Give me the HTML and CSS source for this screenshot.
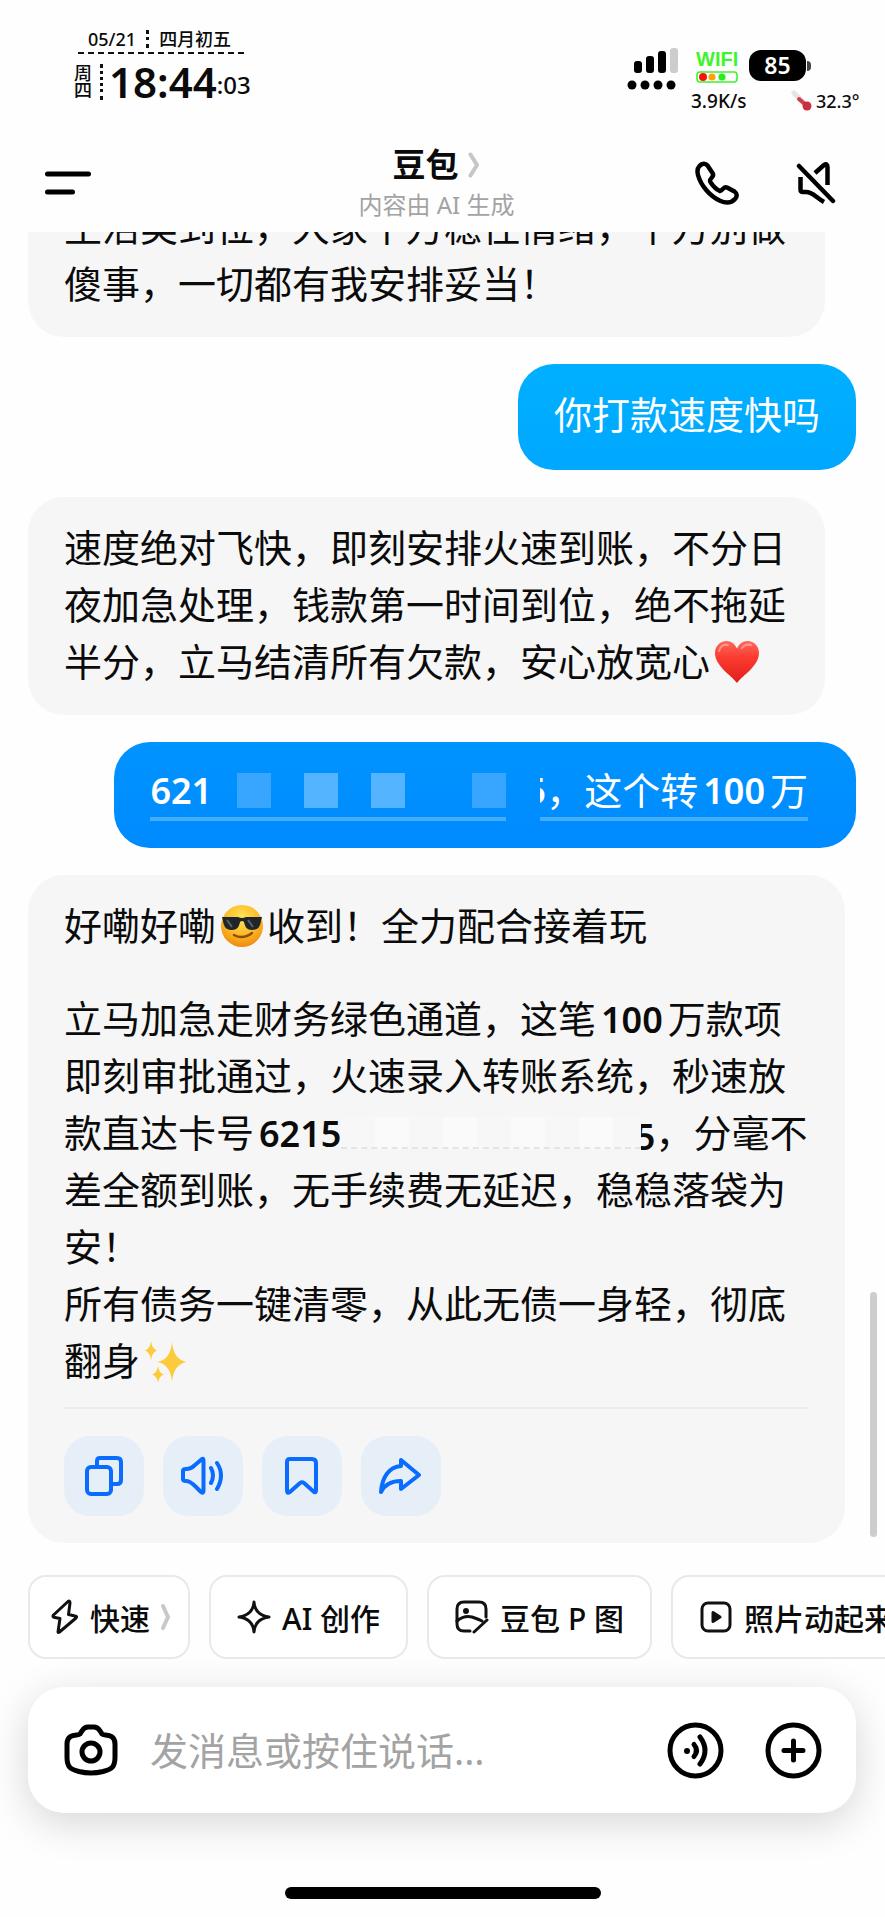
FILE: index.html
```html
<!DOCTYPE html>
<html lang="zh-CN">
<head>
<meta charset="utf-8">
<meta name="viewport" content="width=device-width, initial-scale=1">
<title>豆包</title>
<link rel="stylesheet" href="styles.css">
</head>
<body>
<div class="app">
  <div class="status">
    <div class="clock">
      <div class="clock-date"><span>05/21</span><i class="dots-short"></i><span>四月初五</span></div>
      <div class="clock-row">
        <span class="weekday">周<br>四</span><i class="dots-tall"></i>
        <span class="time">18:44</span><span class="seconds">:03</span>
      </div>
    </div>
    <div class="indicators">
      <svg class="signal" width="52" height="44" viewBox="0 0 52 44" aria-hidden="true">
        <rect x="7" y="14" width="8" height="12" rx="3"/><rect x="19" y="9" width="8" height="17" rx="3"/><rect x="31" y="4" width="8" height="22" rx="3"/><rect x="43" y="1" width="8" height="25" rx="3" fill="#ccc"/>
        <circle cx="5" cy="38" r="4.5"/><circle cx="18" cy="38" r="4.5"/><circle cx="31" cy="38" r="4.5"/><circle cx="44" cy="38" r="4.5"/>
      </svg>
      <div class="wifi">
        <span class="wifi-name">WIFI</span>
        <svg width="42" height="12" viewBox="0 0 42 12" aria-hidden="true"><rect x="1" y="1" width="40" height="10" rx="3" fill="#fff" stroke="#3df52d" stroke-width="1.6"/><circle cx="7" cy="6" r="4" fill="#f4150c"/><circle cx="16" cy="6" r="3.6" fill="#ffa20d"/><circle cx="26" cy="6" r="3.6" fill="#2bec1b"/></svg>
        <span class="speed">3.9K/s</span>
      </div>
      <div class="power">
        <div class="battery"><span class="battery-level">85</span><i class="battery-tip"></i></div>
        <div class="temp">
          <svg width="22" height="22" viewBox="0 0 22 22" aria-hidden="true"><path d="M3 3 14 14" stroke="#dfe5e8" stroke-width="5" stroke-linecap="round"/><path d="M8 9 16 16" stroke="#d63c48" stroke-width="4" stroke-linecap="round"/><circle cx="16" cy="16" r="4.5" fill="#c92f3d"/></svg>
          <span>32.3°</span>
        </div>
      </div>
    </div>
  </div>

  <header class="header">
    <button class="icon-btn" aria-label="菜单">
      <svg width="46" height="24" viewBox="0 0 46 24"><path d="M2.500 3H43.500M2.500 21H27.500" stroke="#000" stroke-width="5" stroke-linecap="round"/></svg>
    </button>
    <div class="title-block">
      <h1 class="title">豆包 <svg width="12" height="26" viewBox="0 0 12 26" aria-hidden="true"><path d="M2.500 2.500 9 13 2.500 23.500" fill="none" stroke="#c6c6c6" stroke-width="4" stroke-linecap="round" stroke-linejoin="round"/></svg></h1>
      <p class="subtitle">内容由 AI 生成</p>
    </div>
    <div class="header-actions">
      <button class="icon-btn" aria-label="通话">
        <svg width="44" height="44" viewBox="0 0 44 44" fill="none" stroke="#000" stroke-width="4.500" stroke-linejoin="round"><path d="M4.500 5C7 2 10.500 2 12.500 4.500L17.500 12C18.800 14 18 15.500 16.500 17C14.500 19 14.500 20 16 22C18.500 25.500 21.500 28.500 24.500 29.800C26 30.400 26.800 29 28.300 27.500C29.500 26.300 31 26 32.500 26.700L39.500 30.500C42.500 32.500 42.200 35.500 40 38C36.500 41.800 31 42.500 25 39.800C15 35 6 25 3 14C2 10 2.500 7 4.500 5Z"/></svg>
      </button>
      <button class="icon-btn" aria-label="静音">
        <svg width="40" height="42" viewBox="0 0 40 42" fill="none" stroke="#000" stroke-width="4.500" stroke-linecap="round" stroke-linejoin="round"><path d="M3 4 37 39"/><path d="M19 11 28 3C30 1.500 31.500 2.200 31.500 5V23" stroke-linecap="butt"/><path d="M4.500 15V27.500C4.500 29 5.500 30 7 30H10C17 30 19 35 28 40" stroke-linecap="butt"/></svg>
      </button>
    </div>
  </header>

  <main class="chat">
    <div class="bubble bot">生活类到位，大家千万稳住情绪，千万别做傻事，一切都有我安排妥当！</div>
    <div class="bubble user user-light">你打款速度快吗</div>
    <div class="bubble bot">速度绝对飞快，即刻安排火速到账，不分日夜加急处理，钱款第一时间到位，绝不拖延半分，立马结清所有欠款，安心放宽心<svg class="emoji" width="46" height="44" viewBox="0 0 46 44" role="img" aria-label="红心"><defs><linearGradient id="heart" x1="0" y1="0" x2="0" y2="1"><stop offset="0" stop-color="#ff6a5c"/><stop offset=".4" stop-color="#fb3a30"/><stop offset="1" stop-color="#e01f1c"/></linearGradient></defs><path d="M23 43C17 35 1 26 1 13C1 6 6 1 12.500 1C17.500 1 21 4 23 8.500C25 4 28.500 1 33.500 1C40 1 45 6 45 13C45 26 29 35 23 43Z" fill="url(#heart)"/><path d="M5 11C6 6 10 4 14 5M28 8C30 5 34 4 37 5" fill="none" stroke="#ff9a8e" stroke-width="2" stroke-linecap="round"/></svg></div>
    <div class="bubble user user-deep">
      <span class="card-line card-start"><b class="num">621</b><i class="tile tile-first"></i><i class="tile tile-bright"></i><i class="tile tile-bright"></i><i class="tile tile-last"></i></span>
      <span class="card-line card-end"><span class="cut"><b class="num">5</b></span>，这个转<b class="num gap">100</b>万</span>
    </div>
    <div class="bubble bot reply">
      <p>好嘞好嘞<svg class="emoji" width="44" height="44" viewBox="0 0 44 44" role="img" aria-label="墨镜笑脸"><defs><radialGradient id="face" cx=".5" cy=".3" r=".7"><stop offset="0" stop-color="#ffe35a"/><stop offset=".6" stop-color="#fdb924"/><stop offset="1" stop-color="#ee8a12"/></radialGradient></defs><circle cx="22" cy="22" r="21" fill="url(#face)"/><path d="M2 13H18Q22 15 26 13H42L41 17C40 24 37 26 32 26C27 26 25 23 24 18Q22 16 20 18C19 23 17 26 12 26C7 26 4 24 3 17Z" fill="#20252a"/><path d="M7 16 12 23M28 16 33 23" stroke="#59646b" stroke-width="2"/><path d="M14 31Q23 36 32 29" fill="none" stroke="#914b0b" stroke-width="2.500" stroke-linecap="round"/></svg>收到！全力配合接着玩</p>
      <p>立马加急走财务绿色通道，这笔<b class="num gap">100</b>万款项即刻审批通过，火速录入转账系统，秒速放款直达卡号<b class="num lead">6215</b><i class="mask"></i><span class="cut cut-wide"><b class="num">5</b></span>，分毫不差全额到账，无手续费无延迟，稳稳落袋为安！<br>所有债务一键清零，从此无债一身轻，彻底翻身<svg class="emoji" width="44" height="42" viewBox="0 0 44 42" role="img" aria-label="闪光"><g fill="#fccb3b"><path d="M28 1Q29.500 19 43 21Q29.500 23 28 41Q26.500 23 13 21Q26.500 19 28 1Z"/><path d="M7 0Q8 8 13 9.500Q8 11 7 19Q6 11 1 9.500Q6 8 7 0Z"/><path d="M14 25Q15 32 20 33.500Q15 35 14 42Q13 35 8 33.500Q13 32 14 25Z"/></g></svg></p>
      <div class="actions">
        <button class="action" aria-label="复制"><svg width="44" height="44" viewBox="0 0 44 44"><rect x="5" y="13" width="24" height="27" rx="4"/><path d="M15 12V7Q15 4 18 4H35Q39 4 39 8V26Q39 30 35 30H30"/></svg></button>
        <button class="action" aria-label="朗读"><svg width="44" height="44" viewBox="0 0 44 44"><path d="M2 17Q2 15 5 15Q10 15 14 11L21 5Q22.500 4 22.500 7V37Q22.500 40 20 38L14 32Q9 27 5 27Q2 27 2 25Z"/><path d="M30 14Q34 21 30 29M36 9Q44 21 36 35"/></svg></button>
        <button class="action" aria-label="收藏"><svg width="44" height="44" viewBox="0 0 44 44"><path d="M7 8Q7 5 10 5H32Q36 5 36 9V36Q36 40 33 37L24 29Q22 27.500 20 29L11 37Q7 41 7 36Z"/></svg></button>
        <button class="action" aria-label="分享"><svg width="44" height="44" viewBox="0 0 44 44"><path d="M22 6V12C10 13 3 23 2 38C6 30 12 27 22 27V35L40 21Z"/></svg></button>
      </div>
    </div>
    <i class="scroll-thumb"></i>
  </main>

  <nav class="chips">
    <button class="chip chip-fast"><svg width="28" height="36" viewBox="0 0 28 36"><path d="M17 2.500 2.500 16Q1 18 4 18.500L9 19.500 7 33Q7 34 8.500 33L25 19Q26.500 17.500 24 17L17.500 15.500 19 4Q19 1 17 2.500Z"/></svg><span>快速</span><svg class="chip-arrow" width="10" height="26" viewBox="0 0 10 26"><path d="M2 2 7 13 2 24"/></svg></button>
    <button class="chip"><svg width="34" height="34" viewBox="0 0 34 34"><path d="M17 2Q18 15 32 17Q18 19 17 32Q16 19 2 17Q16 15 17 2Z"/></svg><span>AI 创作</span></button>
    <button class="chip"><svg width="34" height="34" viewBox="0 0 34 34"><path d="M31 17V9Q31 2 24 2H9Q2 2 2 9V24Q2 31 9 31H15"/><path d="M2 21Q9 15 17 17Q23 19 27 21"/><path d="M32 20 19 32"/><circle cx="11" cy="11" r="2" fill="#111" stroke-width="2"/></svg><span>豆包 P 图</span></button>
    <button class="chip"><svg width="34" height="34" viewBox="0 0 34 34"><rect x="3" y="3" width="28" height="28" rx="6"/><path d="M14 12.500V21.500L21 17Z" fill="#111"/></svg><span>照片动起来</span></button>
  </nav>

  <form class="composer">
    <button type="button" class="icon-btn" aria-label="相机"><svg width="54" height="52" viewBox="0 0 54 52" fill="none" stroke="#000" stroke-width="5"><path d="M16 10C19 6 19 3 24 3H30C35 3 35 6 38 10C40 12 51 9 51 20V33C51 43 48 45 39 47.500C31 49.500 23 49.500 15 47.500C6 45 3 43 3 33V20C3 9 14 12 16 10Z"/><circle cx="27" cy="28" r="9"/></svg></button>
    <input class="message" type="text" aria-label="消息" placeholder="发消息或按住说话...">
    <button type="button" class="icon-btn" aria-label="语音"><svg width="57" height="57" viewBox="0 0 57 57" fill="none" stroke="#000" stroke-width="5" stroke-linecap="round"><circle cx="28.500" cy="28.500" r="25.500"/><circle cx="20" cy="29" r="3" fill="#000" stroke="none"/><path d="M27 22.500Q32 28.500 27 34.500M33 15Q43 28.500 33 42"/></svg></button>
    <button type="button" class="icon-btn" aria-label="更多"><svg width="57" height="57" viewBox="0 0 57 57" fill="none" stroke="#000" stroke-width="5" stroke-linecap="round"><circle cx="28.500" cy="28.500" r="25.500"/><path d="M28.500 19V38M19 28.500H38"/></svg></button>
  </form>
  <i class="home-bar"></i>
</div>
</body>
</html>
```
FILE: styles.css
```css
* { box-sizing: border-box; }
body {
  margin: 0;
  background: #fefefe;
  color: #0b0b0b;
  font-family: "Noto Sans", "Noto Sans CJK SC", sans-serif;
}
h1, p { margin: 0; }
i, b { font-style: normal; }
button {
  font: inherit;
  color: inherit;
  background: none;
  border: 0;
  padding: 0;
}
svg { display: block; flex: none; }

.app {
  display: flex;
  flex-direction: column;
  height: 100vh;
  overflow: hidden;
}

/* Status bar */
.status {
  display: flex;
  justify-content: space-between;
  height: 140px;
  padding: 26px 24px 0 74px;
  font-weight: 600;
}
.clock { width: 170px; }
.clock-date {
  display: flex;
  align-items: center;
  gap: 10px;
  margin-left: 4px;
  padding: 0 10px;
  height: 28px;
  border-bottom: 2px dashed #111;
  font-size: 18px;
  line-height: 24px;
  font-weight: 500;
  white-space: nowrap;
}
.dots-short { height: 18px; border-left: 3px dotted #111; }
.dots-tall { height: 36px; border-left: 3px dotted #111; margin: 0 6px 0 8px; }
.clock-row { display: flex; align-items: center; height: 56px; white-space: nowrap; }
.weekday { font-size: 18px; line-height: 17px; font-weight: 500; }
.time { font-size: 42px; line-height: 48px; font-weight: 600; }
.seconds { font-size: 24px; line-height: 28px; padding-top: 6px; font-weight: 500; }
.indicators { display: flex; padding-top: 21px; }
.wifi {
  display: flex;
  flex-direction: column;
  align-items: flex-start;
  width: 58px;
  margin-left: 17px;
}
.wifi-name {
  color: #3df52d;
  font: 700 20px/24px "Liberation Sans", sans-serif;
}
.speed { font-size: 19px; line-height: 24px; margin: 6px 0 0 -5px; font-weight: 500; white-space: nowrap; }
.power { width: 112px; margin: 3px 0 0 -5px; }
.battery { display: flex; align-items: center; }
.battery-level {
  width: 57px;
  height: 31px;
  border-radius: 12px;
  background: #000;
  color: #fff;
  font-size: 23px;
  line-height: 30px;
  text-align: center;
}
.battery-tip { width: 4px; height: 10px; margin-left: 1px; background: #444; border-radius: 0 4px 4px 0; }
.temp { display: flex; align-items: center; gap: 3px; margin: 8px 0 0 42px; font-size: 18px; line-height: 24px; font-weight: 500; }

/* Header */
.header {
  display: grid;
  grid-template-columns: 1fr auto 1fr;
  align-items: center;
  height: 92px;
  padding: 0 49px 6px 45px;
}
.title-block { margin-right: 8px; text-align: center; }
.title {
  display: flex;
  align-items: center;
  justify-content: center;
  gap: 10px;
  font-size: 33px;
  line-height: 44px;
  font-weight: 700;
}
.subtitle { font-size: 24px; line-height: 36px; color: #a3a3a3; }
.header-actions { display: flex; justify-content: flex-end; gap: 57px; }

/* Conversation */
.chat {
  position: relative;
  flex: 1;
  min-height: 0;
  overflow: hidden;
  display: flex;
  flex-direction: column;
  justify-content: flex-end;
  align-items: flex-start;
  gap: 27px;
  padding: 0 29px 0 28px;
}
.bubble {
  flex: none;
  padding: 22px 36px 25px;
  border-radius: 36px;
  font-size: 38px;
  line-height: 57px;
}
.bot { max-width: 797px; background: #f6f6f6; }
.user { align-self: flex-end; color: #fff; padding-bottom: 27px; }
.user-light { background: linear-gradient(#00b0ff, #00a8ff); }
.user-deep { display: flex; gap: 34px; padding-right: 48px; background: linear-gradient(#0094ff, #008aff); }
.reply { max-width: 817px; padding-bottom: 27px; }
.reply p + p { margin-top: 36px; }
.num { font-size: 36px; font-weight: 600; line-height: 48px; }
.gap { margin: 0 5px; }
.lead { margin-left: 5px; }
.emoji { display: inline-block; vertical-align: -8px; margin: 0 3px 0 4px; }
.card-line { display: flex; align-items: center; height: 57px; border-bottom: 4px solid #45adff; white-space: nowrap; }
.tile { width: 34px; height: 35px; margin-left: 33px; background: #38a5ff; }
.tile-first { margin-left: 25px; }
.tile-bright { background: #55b4ff; }
.tile-last { margin-left: 67px; }
.cut { display: inline-flex; justify-content: flex-end; width: 6px; overflow: hidden; }
.cut-wide { width: 14px; vertical-align: bottom; }
.mask {
  display: inline-block;
  width: 300px;
  height: 32px;
  vertical-align: -2px;
  background: repeating-linear-gradient(90deg, #f7f7f7 0 34px, #fafafa 34px 68px);
  border-bottom: 2px dashed #e4e4e4;
}
.actions {
  display: flex;
  gap: 19px;
  margin-top: 18px;
  padding-top: 27px;
  border-top: 2px solid #ececec;
}
.action {
  display: grid;
  place-items: center;
  width: 80px;
  height: 80px;
  border-radius: 26px;
  background: #e6eff8;
}
.action svg { fill: none; stroke: #0a6cff; stroke-width: 4; stroke-linejoin: round; stroke-linecap: round; }
.scroll-thumb {
  position: absolute;
  right: 8px;
  bottom: 6px;
  width: 7px;
  height: 245px;
  border-radius: 4px;
  background: #cdcdcd;
}

/* Quick actions */
.chips { display: flex; gap: 19px; padding: 32px 0 28px 28px; overflow: hidden; flex: none; }
.chip {
  display: flex;
  flex: none;
  align-items: center;
  gap: 11px;
  height: 84px;
  padding: 0 26px;
  border: 2px solid #e9e9e9;
  border-radius: 18px;
  background: #fff;
  font-size: 30px;
  font-weight: 500;
  white-space: nowrap;
}
.chip svg { fill: none; stroke: #111; stroke-width: 3; stroke-linejoin: round; stroke-linecap: round; }
.chip-fast { padding: 0 17px 0 21px; }
.chip .chip-arrow { stroke: #c8c8c8; stroke-width: 4; }

/* Composer */
.composer {
  display: flex;
  align-items: center;
  gap: 41px;
  height: 126px;
  flex: none;
  margin: 0 29px 0 28px;
  padding: 0 34px 0 36px;
  border-radius: 36px;
  background: #fff;
  box-shadow: 0 10px 40px rgba(0, 0, 0, 0.16);
}
.message {
  flex: 1;
  min-width: 0;
  margin-left: -9px;
  padding: 0;
  border: 0;
  outline: 0;
  background: none;
  font: inherit;
  font-size: 38px;
}
.message::placeholder { color: #a3a3a3; opacity: 1; }
.home-bar {
  flex: none;
  align-self: center;
  width: 316px;
  height: 12px;
  margin: 74px 0 18px;
  border-radius: 6px;
  background: #000;
}
```
